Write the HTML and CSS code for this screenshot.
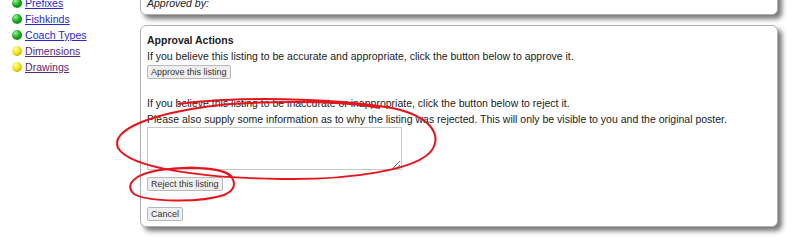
FILE: index.html
```html
<!DOCTYPE html>
<html lang="en">
<head>
  <meta charset="UTF-8">
  <title>Listing approval</title>
  <link rel="stylesheet" href="styles.css">
</head>
<body>

<div class="page">
  <!-- Sidebar -->
  <ul class="side-menu">
    <li><span class="dot green"></span><a href="#">Prefixes</a></li>
    <li><span class="dot green"></span><a href="#">Fishkinds</a></li>
    <li><span class="dot green"></span><a href="#">Coach Types</a></li>
    <li><span class="dot yellow"></span><a href="#" class="visited">Dimensions</a></li>
    <li><span class="dot yellow"></span><a href="#" class="visited">Drawings</a></li>
  </ul>

  <!-- Content -->
  <div class="content">
    <div class="box box-top">
      <p class="approved">Approved by:</p>
    </div>

    <div class="box">
      <div class="box-title">Approval Actions</div>
      <div>If you believe this listing to be accurate and appropriate, click the button below to approve it.</div>
      <button class="btn">Approve this listing</button>

      <div class="reject-text">If you believe this listing to be inaccurate or inappropriate, click the button below to reject it.</div>
      <div>Please also supply some information as to why the listing was rejected. This will only be visible to you and the original poster.</div>
      <textarea class="reason"></textarea>
      <button class="btn btn-reject">Reject this listing</button>
      <button class="btn btn-cancel">Cancel</button>
    </div>
  </div>
</div>

<!-- red annotation marks -->
<svg class="marks" width="800" height="252" viewBox="0 0 800 252">
  <path d="M178 104 C240 96 330 98 392 108 C430 116 442 134 432 150 C418 170 350 180 282 179 C200 178 130 168 118 148 C110 130 150 112 230 104 C290 100 350 102 380 108"
        fill="none" stroke="#e8141c" stroke-width="2"/>
  <path d="M232 177 C224 167 190 166 160 170 C134 174 124 185 134 194 C148 202 200 203 224 195 C238 189 236 179 226 173 C212 167 186 167 172 169"
        fill="none" stroke="#e8141c" stroke-width="2"/>
</svg>

</body>
</html>
```

FILE: styles.css
```css
body, html {
  margin: 0;
  padding: 0;
  font-family: "Liberation Sans", Arial, sans-serif;
  font-size: 10.5px;
  color: #222;
  background: white;
  overflow: hidden;
}
.page {
  display: flex;
}
.side-menu {
  list-style: none;
  margin: -5px 0 0 0;
  padding: 0 0 0 12px;
  width: 128px;
  font-size: 10.6px;
}
.side-menu li {
  display: flex;
  align-items: center;
  height: 16px;
}
.side-menu a {
  color: #2a2acc;
  margin-left: 3px;
}
.side-menu a.visited {
  color: #5a2a7a;
}
.dot {
  width: 10px;
  height: 10px;
  border-radius: 50%;
  display: inline-block;
}
.dot.green {
  background: radial-gradient(circle at 35% 30%, #9cf59c 0, #1fae1f 45%, #0a5e0a 100%);
}
.dot.yellow {
  background: radial-gradient(circle at 35% 30%, #ffffb0 0, #f0e010 50%, #a09000 100%);
}

.content {
  width: 638px;
}
.box {
  border: 1px solid #b0b0b0;
  border-radius: 6px;
  background: white;
  box-shadow: 4px 4px 5px #777;
  padding: 6px 6px 5px 6px;
  line-height: 16px;
  margin-bottom: 10px;
}
.box-top {
  margin-top: -14px;
  padding: 8px 6px 3px 6px;
}
.approved {
  margin: 0;
  font-style: italic;
}
.box-title {
  font-weight: bold;
}
.btn {
  display: block;
  font-family: "Liberation Sans", Arial, sans-serif;
  font-size: 9px;
  color: #333;
  background: #efefef;
  border: 1px solid #b8b8b8;
  border-radius: 2px;
  padding: 0 3px;
  height: 14px;
  line-height: 12px;
  margin: 1px 0 0 0;
}
.reject-text {
  margin-top: 16px;
}
.reason {
  display: block;
  width: 253px;
  height: 41px;
  border: 1px solid #c8c8c8;
  margin: 0;
  padding: 0;
  resize: vertical;
}
.btn-reject {
  margin-top: 7px;
}
.btn-cancel {
  margin-top: 16px;
}
.marks {
  position: absolute;
  left: 0;
  top: 0;
  pointer-events: none;
}
```
